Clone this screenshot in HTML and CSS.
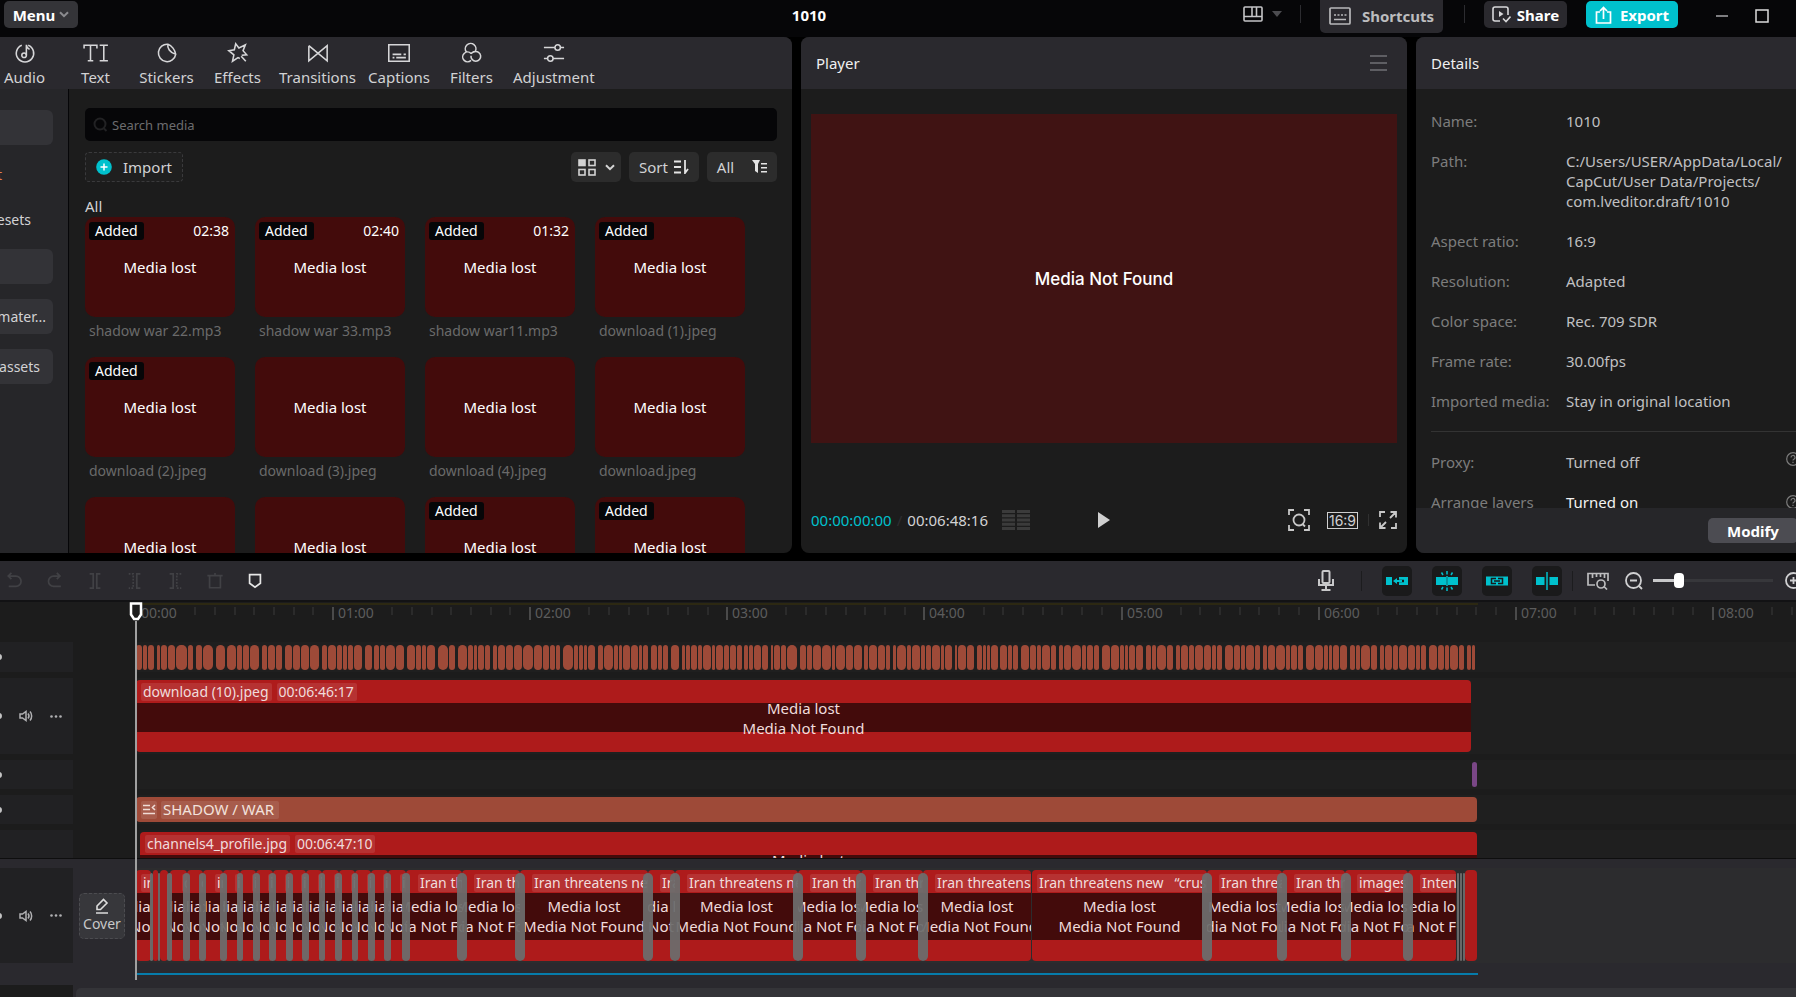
FILE: index.html
```html
<!DOCTYPE html>
<html lang="en">
<head>
<meta charset="utf-8">
<title>1010</title>
<link rel="stylesheet" href="styles.css">
</head>
<body>
<div class="app">
  <header class="titlebar">
    <div class="titlebar-left">
      <button class="btn btn-menu">Menu
        <svg width="10" height="7" viewBox="0 0 10 7" fill="none" stroke="#8b8b8f" stroke-width="2"><path d="M1 1.2l4 4 4-4"/></svg>
      </button>
    </div>
    <h1 class="project-title">1010</h1>
    <div class="titlebar-right">
      <button class="icon-btn layout-btn" aria-label="Layout">
        <svg width="20" height="16" viewBox="0 0 20 16" fill="none" stroke="#c4c4c6" stroke-width="1.6"><rect x="1" y="1" width="18" height="14" rx="1"/><path d="M1 10.5h18M9 1v9.500M13.500 1v9.500"/></svg>
        <svg width="10" height="6" viewBox="0 0 10 6" fill="#4c4c50"><path d="M0 0h10L5 6z"/></svg>
      </button>
      <span class="bar-sep"></span>
      <button class="btn btn-shortcuts">
        <svg width="22" height="18" viewBox="0 0 22 18" fill="none" stroke="#b8b8ba" stroke-width="1.7"><rect x="1" y="1" width="20" height="16" rx="1"/><path d="M5 8h2M8.500 8h2M12 8h2M15.500 8h2M5 12.500h12"/></svg>
        Shortcuts
      </button>
      <span class="bar-sep"></span>
      <button class="btn btn-share">
        <svg width="19" height="17" viewBox="0 0 19 17" fill="none" stroke="#d8d8da" stroke-width="1.6"><path d="M8 15H3a2 2 0 0 1-2-2V3a2 2 0 0 1 2-2h11a2 2 0 0 1 2 2v6M11 12.500l3 3 4.500-5"/><path d="M7 5l4.500 3L7 11z" fill="#d8d8da" stroke="none"/></svg>
        Share
      </button>
      <button class="btn btn-export">
        <svg width="17" height="18" viewBox="0 0 17 18" fill="none" stroke="#fff" stroke-width="1.7"><path d="M5 6H1.500v11h14V6H12M8.500 13V1.500M5 5l3.500-3.500L12 5"/></svg>
        Export
      </button>
      <button class="icon-btn win-btn" aria-label="Minimize"><svg width="12" height="2"><rect width="12" height="2" fill="#7d7d80"/></svg></button>
      <button class="icon-btn win-btn" aria-label="Maximize"><svg width="14" height="14" fill="none" stroke="#dcdcdc" stroke-width="1.500"><rect x="1" y="1" width="12" height="12"/></svg></button>
    </div>
  </header>

  <main class="panels">
    <section class="panel media">
      <nav class="tabs">
        <button class="tab"><svg viewBox="0 0 24 24"><path d="M8.500 3.500a9.500 9.500 0 1 0 7 0"/><circle cx="11" cy="14.500" r="2.500"/><path d="M13.500 14.500V3c0 3 1.500 4 3.500 5"/></svg>Audio</button>
        <button class="tab"><svg class="icon-wide" viewBox="0 0 28 24"><path d="M1 7V3.500h14V7M8 3.500v17M5 20.500h6M18 3.500h9M22.500 3.500v17M18 20.500h9"/></svg>Text</button>
        <button class="tab"><svg viewBox="0 0 24 24"><path d="M13 2.500A9.500 9.500 0 1 0 21.500 13.500C21 9 17 3.500 13 2.500zM13 2.500c-1 4 2 9 8.500 11"/></svg>Stickers</button>
        <button class="tab"><svg viewBox="0 0 24 24"><path d="M14 18l-2-1-6 4 1.500-7L2 9.500l6-1L9.500 2 13 6.500 20 3l-2.500 6.500L21.500 14 16 14.500M15.500 15.500l5 5.500"/></svg>Effects</button>
        <button class="tab"><svg viewBox="0 0 24 24"><path d="M2 4v16.500L22 4v16.500L2 4"/></svg>Transitions</button>
        <button class="tab"><svg viewBox="0 0 24 24"><path d="M.8 3h22.400v18H.8zM5 13.500h9.500M17 13.500h2.500M5 17h2M9 17h10.500" stroke-width="1.800"/></svg>Captions</button>
        <button class="tab"><svg viewBox="0 0 24 24"><path d="M7 11A5.800 5.800 0 1 1 16.500 10.500M12 12.500A5.300 5.300 0 1 0 12 20M12 15a5.300 5.300 0 1 0 4-4.500c-1.500 0-3 1.500-4 2"/></svg>Filters</button>
        <button class="tab"><svg viewBox="0 0 24 24"><path d="M1 6h12M19 6h4M1 18h4M11 18h12"/><circle cx="16" cy="6" r="3"/><circle cx="8" cy="18" r="3"/></svg>Adjustment</button>
      </nav>
      <div class="media-main">
        <aside class="sidebar">
          <button class="side-item side-filled" aria-label="Media"></button>
          <button class="side-item side-accent">t</button>
          <button class="side-item side-sub">esets</button>
          <button class="side-item side-filled side-gap" aria-label="Library"></button>
          <button class="side-item side-filled side-gap">mater...</button>
          <button class="side-item side-filled side-gap side-short">assets</button>
        </aside>
        <div class="library">
          <label class="search">
            <svg width="15" height="15" viewBox="0 0 15 15" fill="none" stroke="#222224" stroke-width="2"><circle cx="7" cy="7" r="5.500"/><path d="M10.500 11l3 3"/></svg>
            <input type="text" placeholder="Search media" aria-label="Search media">
          </label>
          <div class="library-bar">
            <button class="import"><svg width="16" height="16" viewBox="0 0 16 16"><circle cx="8" cy="8" r="7.800" fill="#00c1cd"/><path d="M4.500 8h7M8 4.500v7" stroke="#fff" stroke-width="1.500"/></svg>Import</button>
            <div class="filters">
              <button class="chip chip-view" aria-label="View">
                <svg width="18" height="17" viewBox="0 0 18 17" fill="none" stroke="#d4d4d4" stroke-width="1.600"><rect x="1" y="1" width="6" height="5.500" fill="#d4d4d4"/><rect x="11" y="1" width="6" height="5.500"/><rect x="1" y="10.500" width="6" height="5.500"/><rect x="11" y="10.500" width="6" height="5.500"/></svg>
                <svg width="10" height="7" viewBox="0 0 10 7" fill="none" stroke="#d4d4d4" stroke-width="2"><path d="M1 1.200l4 4 4-4"/></svg>
              </button>
              <button class="chip">Sort <svg width="15" height="14" viewBox="0 0 15 14" fill="none" stroke="#e4e4e4" stroke-width="1.800"><path d="M0 1.500h7M0 7h7M0 12.500h7M11 0v13l3-4"/></svg></button>
              <button class="chip chip-all">All <svg width="15" height="14" viewBox="0 0 15 14" fill="#e4e4e4"><path d="M0 0h8L6 4v9L3 11V4zM9 3h6v1.500H9zM9 7h6v1.500H9zM9 11h6v1.500H9z"/></svg></button>
            </div>
          </div>
          <h2 class="group-title">All</h2>
          <div class="thumbs">
            <figure class="item"><div class="thumb"><span class="added">Added</span><span class="dur">02:38</span>Media lost</div><figcaption>shadow war 22.mp3</figcaption></figure>
            <figure class="item"><div class="thumb"><span class="added">Added</span><span class="dur">02:40</span>Media lost</div><figcaption>shadow war 33.mp3</figcaption></figure>
            <figure class="item"><div class="thumb"><span class="added">Added</span><span class="dur">01:32</span>Media lost</div><figcaption>shadow war11.mp3</figcaption></figure>
            <figure class="item"><div class="thumb"><span class="added">Added</span>Media lost</div><figcaption>download (1).jpeg</figcaption></figure>
            <figure class="item"><div class="thumb"><span class="added">Added</span>Media lost</div><figcaption>download (2).jpeg</figcaption></figure>
            <figure class="item"><div class="thumb">Media lost</div><figcaption>download (3).jpeg</figcaption></figure>
            <figure class="item"><div class="thumb">Media lost</div><figcaption>download (4).jpeg</figcaption></figure>
            <figure class="item"><div class="thumb">Media lost</div><figcaption>download.jpeg</figcaption></figure>
            <figure class="item"><div class="thumb">Media lost</div></figure>
            <figure class="item"><div class="thumb">Media lost</div></figure>
            <figure class="item"><div class="thumb"><span class="added">Added</span>Media lost</div></figure>
            <figure class="item"><div class="thumb"><span class="added">Added</span>Media lost</div></figure>
          </div>
        </div>
      </div>
    </section>

    <section class="panel player">
      <div class="panel-head"><h2>Player</h2>
        <button class="icon-btn" aria-label="Player menu"><svg width="17" height="16" viewBox="0 0 17 16" stroke="#5e5e63" stroke-width="2"><path d="M0 1h17M0 8h17M0 15h17"/></svg></button>
      </div>
      <div class="stage">Media Not Found</div>
      <div class="controls">
        <div class="controls-left">
          <span class="time-now">00:00:00:00</span><span class="time-sep">/</span><span>00:06:48:16</span>
          <svg class="meter" width="28" height="20" viewBox="0 0 28 20" stroke="#3b3b3b" stroke-width="3"><path d="M0 1.500h13M15 1.500h13M0 5.800h13M15 5.800h13M0 10h13M15 10h13M0 14.200h13M15 14.200h13M0 18.500h13M15 18.500h13"/></svg>
        </div>
        <button class="icon-btn" aria-label="Play"><svg width="12" height="16" viewBox="0 0 12 16" fill="#d0d0d0"><path d="M0 0l12 8-12 8z"/></svg></button>
        <div class="controls-right">
          <button class="icon-btn" aria-label="Zoom preview"><svg width="22" height="22" viewBox="0 0 22 22" fill="none" stroke="#c8c8c8" stroke-width="1.800"><path d="M1 6V1h5M16 1h5v5M21 16v5h-5M6 21H1v-5M14.500 15l2.500 2.500"/><circle cx="11" cy="11" r="5.500"/></svg></button>
          <button class="ratio">16:9</button>
          <span class="thin-sep"></span>
          <button class="icon-btn" aria-label="Full screen"><svg width="18" height="18" viewBox="0 0 18 18" fill="none" stroke="#c8c8c8" stroke-width="1.800"><path d="M1 6V1h5M12 17h5v-5M11 7l6-6M11.500 1H17v5.500M7 11l-6 6M1 11.500V17h5.500"/></svg></button>
        </div>
      </div>
    </section>

    <section class="panel details">
      <div class="panel-head"><h2>Details</h2></div>
      <dl class="props">
        <div><dt>Name:</dt><dd>1010</dd></div>
        <div><dt>Path:</dt><dd>C:/Users/USER/AppData/Local/<br>CapCut/User Data/Projects/<br>com.lveditor.draft/1010</dd></div>
        <div><dt>Aspect ratio:</dt><dd>16:9</dd></div>
        <div><dt>Resolution:</dt><dd>Adapted</dd></div>
        <div><dt>Color space:</dt><dd>Rec. 709 SDR</dd></div>
        <div><dt>Frame rate:</dt><dd>30.00fps</dd></div>
        <div class="ruled"><dt>Imported media:</dt><dd>Stay in original location</dd></div>
        <div><dt>Proxy:</dt><dd>Turned off</dd><svg class="help" viewBox="0 0 14 14"><circle cx="7" cy="7" r="6.300"/><path d="M5 5.500a2 2 0 1 1 2.800 1.800c-.6.300-.8.500-.8 1.200M7 9.800v1.200"/></svg></div>
        <div><dt>Arrange layers</dt><dd class="strong">Turned on</dd><svg class="help help-mid" viewBox="0 0 14 14"><circle cx="7" cy="7" r="6.300"/><path d="M5 5.500a2 2 0 1 1 2.800 1.800c-.6.300-.8.500-.8 1.200M7 9.800v1.200"/></svg></div>
      </dl>
      <footer class="details-foot"><button class="modify">Modify</button></footer>
    </section>
  </main>

  <section class="timeline">
    <div class="tl-bar">
      <div class="tl-tools">
        <button aria-label="Undo"><svg viewBox="0 0 20 20"><path d="M6 1L2.500 4.500 6 8M2.500 4.500H11a5.500 5.500 0 0 1 0 11.500H3"/></svg></button>
        <button aria-label="Redo"><svg viewBox="0 0 20 20"><path d="M12 1l3.500 3.500L12 8M15.500 4.500H8.500a5.500 5.500 0 0 0 0 11.500h8"/></svg></button>
        <button aria-label="Split"><svg viewBox="0 0 20 20"><path d="M4 2h4v16H4M16 2h-4v16h4"/></svg></button>
        <button aria-label="Delete left"><svg viewBox="0 0 20 20"><path d="M3 2h5v16H3" stroke-dasharray="2 1.500"/><path d="M16 2h-4v16h4"/></svg></button>
        <button aria-label="Delete right"><svg viewBox="0 0 20 20"><path d="M4 2h4v16H4"/><path d="M17 2h-5v16h5" stroke-dasharray="2 1.500"/></svg></button>
        <button aria-label="Delete"><svg viewBox="0 0 20 20"><path d="M1.500 4h17M10 1v3M4 4v13.500h12V4"/></svg></button>
        <button class="on" aria-label="Marker"><svg viewBox="0 0 20 20"><path d="M4 3h12v9.500L10 17l-6-4.500z"/></svg></button>
      </div>
      <div class="tl-options">
        <button class="icon-btn" aria-label="Record"><svg width="16" height="21" viewBox="0 0 16 21" fill="none" stroke="#c8c8ca" stroke-width="2"><rect x="4.500" y="1" width="7" height="12" rx="1"/><path d="M1 9v6h14V9M8 15v4M3.500 20h9"/></svg></button>
        <span class="tl-sep sep-a"></span>
        <div class="toggles">
          <button aria-label="Main track magnet"><svg viewBox="0 0 24 20"><path d="M1 6h6v8H1zM14 6h9v8h-9v-2.800h5V8.800h-5z"/><path d="M8 10l4-3v2h5v2h-5v2z"/></svg></button>
          <button aria-label="Auto snapping"><svg viewBox="0 0 24 20"><path d="M1 6h10v8H1zM13 6h10v8H13z"/><path class="ln" d="M12 0v3.500M6.500 1.500l1.500 2.500M17.500 1.500L16 4M12 16.500V20M6.500 18.500L8 16M17.500 18.500L16 16M12 5v10"/></svg></button>
          <button aria-label="Linkage"><svg viewBox="0 0 24 20"><path d="M1 5.500h22v9H1z"/><path class="dk" d="M11 7.500H6.500v5H11M13 7.500h4.500v5H13M9 10h6"/></svg></button>
          <button aria-label="Preview axis"><svg viewBox="0 0 24 20"><path d="M1 6h8.500v8H1zM14.500 6H23v8h-8.500z"/><path class="ln" d="M12 1v18"/></svg></button>
        </div>
        <span class="tl-sep sep-b"></span>
        <button class="icon-btn" aria-label="Fit timeline"><svg width="22" height="18" viewBox="0 0 22 18" fill="none" stroke="#bcbcbe" stroke-width="1.700"><path d="M8 13H1V1.500h20V9M5.500 2v4M9.500 2v3M13.500 2v3M17.500 2v4M17 14.500l3 3"/><circle cx="14" cy="12" r="4"/></svg></button>
        <button class="icon-btn zoom-out" aria-label="Zoom out"><svg width="18" height="18" viewBox="0 0 18 18" fill="none" stroke="#d0d0d2" stroke-width="1.800"><circle cx="8.500" cy="8.500" r="7.500"/><path d="M5 8.500h7M14 14l3 3"/></svg></button>
        <input class="zoom" type="range" min="0" max="100" value="19" aria-label="Timeline zoom">
        <button class="icon-btn zoom-in" aria-label="Zoom in"><svg width="18" height="18" viewBox="0 0 18 18" fill="none" stroke="#d0d0d2" stroke-width="1.800"><circle cx="8.500" cy="8.500" r="7.500"/><path d="M5 8.500h7M8.500 5v7M14 14l3 3"/></svg></button>
      </div>
    </div>

    <div class="tl-body">
      <div class="tl-scroll">
        <div class="ruler" id="ruler"></div>
        <div class="track t-small"><div class="head"><i class="dot"></i></div><div class="lane" id="captions"></div></div>
        <div class="track t-video"><div class="head"><i class="dot"></i>
            <svg class="spk" viewBox="0 0 14 12"><path d="M1 4h2.500L7 1.500v9L3.500 8H1zM9 3.500c1.200 1.500 1.200 3.500 0 5M11 1.500c2.200 2.500 2.200 6.500 0 9"/></svg>
            <svg class="more" viewBox="0 0 12 3"><circle cx="1.500" cy="1.500" r="1.300"/><circle cx="6" cy="1.500" r="1.300"/><circle cx="10.500" cy="1.500" r="1.300"/></svg></div>
          <div class="lane"><div class="clip" style="left:0;width:1335px"><div class="labels"><span>download (10).jpeg</span><span>00:06:46:17</span></div><div class="lost lost-short"><p>Media lost</p><p>Media Not Found</p></div></div></div></div>
        <div class="track t-text"><div class="head"><i class="dot"></i></div><div class="lane"><div class="bit-purple" style="left:1336px;width:5px"></div></div></div>
        <div class="track t-text"><div class="head"><i class="dot"></i></div><div class="lane"><div class="text-clip" style="left:0;width:1341px"><span><svg width="13" height="11" viewBox="0 0 13 11" fill="none" stroke="#f0dcd6" stroke-width="1.600"><path d="M0 1.500h7M0 5.500h7M0 9.500h12M12 1L9.500 3.500 12 6"/></svg></span><span>SHADOW / WAR</span></div></div></div>
        <div class="track t-video t-last"><div class="head"></div><div class="lane"><div class="clip" style="left:4px;width:1337px"><div class="labels"><span>channels4_profile.jpg</span><span>00:06:47:10</span></div><div class="lost lost-short"><p>Media lost</p><p>Media Not Found</p></div></div></div></div>
      </div>
      <div class="tl-main">
        <div class="track t-main"><div class="head"><i class="dot"></i>
            <svg class="spk" viewBox="0 0 14 12"><path d="M1 4h2.500L7 1.500v9L3.500 8H1zM9 3.500c1.200 1.500 1.200 3.500 0 5M11 1.500c2.200 2.500 2.200 6.500 0 9"/></svg>
            <svg class="more" viewBox="0 0 12 3"><circle cx="1.500" cy="1.500" r="1.300"/><circle cx="6" cy="1.500" r="1.300"/><circle cx="10.500" cy="1.500" r="1.300"/></svg></div>
          <div class="cover-cell"><button class="cover"><svg width="14" height="16" viewBox="0 0 14 16" fill="none" stroke="#dcdcdc" stroke-width="1.600"><path d="M2 8l6.500-6.500L12 5l-6.500 6.500H2zM1 15h12"/></svg>Cover</button></div>
          <div class="lane" id="main-lane"></div></div>
        <div class="extent"></div>
        <div class="tl-foot"><div class="corner"></div><div class="hscroll"></div></div>
      </div>
      <div class="playhead"><svg width="14" height="19" viewBox="0 0 14 19" fill="#1c1c1c" stroke="#fff" stroke-width="2.500"><path d="M2 1.500h10v11L9 17H5l-3-4.500z"/></svg></div>
    </div>
  </section>
</div>
<script src="app.js"></script>
</body>
</html>
```

FILE: styles.css
```css
* { box-sizing: border-box; }
body { margin: 0; background: #000; color: #d2d2d4; font: 15px/20px "Noto Sans", "Open Sans", sans-serif; overflow: hidden; }
button { font: inherit; color: inherit; background: none; border: 0; padding: 0; display: flex; align-items: center; justify-content: center; flex: none; }
h1, h2, p, dl, dd, figure { margin: 0; font-size: 15px; font-weight: 400; }
svg { flex: none; display: block; }
.app { height: 100vh; display: flex; flex-direction: column; }

.titlebar { flex: none; height: 37px; display: flex; background: #060608; overflow: hidden; }
.titlebar-left { width: 375px; padding: 1px 0 0 4px; }
.project-title { flex: 1; text-align: center; font-weight: 700; color: #fff; padding-top: 5px; }
.titlebar-right { display: flex; align-items: flex-start; padding-right: 24px; }
.btn { height: 27px; border-radius: 5px; font-weight: 700; color: #fff; }
.btn-menu { width: 74px; gap: 4px; background: #343438; }
.layout-btn { gap: 9px; height: 28px; }
.bar-sep { width: 1px; height: 18px; margin: 5px 19px 0 18px; background: #2c2c30; }
.btn-shortcuts { height: 33px; width: 123px; gap: 11px; background: #2a292e; color: #bcbcbe; border-radius: 0 0 5px 5px; padding-bottom: 1px; }
.btn-shortcuts + .bar-sep { margin-left: 21px; }
.btn-share { width: 83px; margin-top: 1px; gap: 6px; background: #2a292e; }
.btn-export { width: 92px; margin: 1px 34px 0 19px; gap: 8px; background: #00c1cd; }
.win-btn { width: 20px; height: 32px; margin-left: 20px; }
.btn-export + .win-btn { margin-left: 0; }

.panels { flex: 516 1 0; min-height: 0; display: grid; grid-template-columns: 792fr 606fr 380fr; gap: 9px; }
.panel { min-width: 0; min-height: 0; background: #1c1c1c; border-radius: 8px; overflow: hidden; display: flex; flex-direction: column; }
.media { border-radius: 0 8px 8px 0; }
.details { border-radius: 8px 0 0 8px; }
.panel-head { flex: none; height: 52px; padding: 0 20px 0 15px; background: #2a292e; display: flex; align-items: center; justify-content: space-between; color: #f0f0f0; }

.tabs { flex: none; height: 52px; background: #2a292e; display: flex; margin-left: -11px; }
.tab { flex-direction: column; justify-content: flex-start; min-width: 71px; padding: 5px 6px 0; gap: 3px; }
.tab svg { width: 22px; height: 22px; fill: none; stroke: #d6d6d8; stroke-width: 1.700; }
.tab .icon-wide { width: 26px; }
.media-main { flex: 1; min-height: 0; display: flex; }
.sidebar { width: 69px; flex: none; padding: 21px 15px 0 0; background: #262629; border-right: 1px solid #060608; font-size: 14px; overflow: hidden; }
.side-item { width: 100%; height: 35px; justify-content: flex-end; padding-right: 7px; }
.side-filled { background: #333337; border-radius: 0 6px 6px 0; }
.side-accent { color: #e08050; margin-top: 12px; padding-right: 51px; }
.side-sub { margin-top: 10px; padding-right: 22px; }
.side-gap { margin-top: 15px; }
.side-sub + .side-gap { margin-top: 12px; }
.side-short { padding-right: 13px; }
.library { flex: 1; min-width: 0; padding: 19px 15px 0 16px; overflow: hidden; }
.search { height: 33px; display: flex; align-items: center; gap: 4px; padding: 0 8px; background: #060608; border-radius: 5px; }
.search input { flex: 1; background: none; border: 0; padding: 0; outline: 0; color: #ddd; font: 13px/20px "Noto Sans", "Open Sans", sans-serif; }
.search input::placeholder { color: #6c6c6e; opacity: 1; }
.library-bar { display: flex; justify-content: space-between; margin-top: 11px; }
.import { width: 98px; height: 30px; gap: 11px; border: 1px dashed #3a3a3c; border-radius: 4px; background: #1f1f1f; }
.filters { display: flex; gap: 8px; }
.chip { width: 70px; height: 30px; gap: 6px; background: #2c2c2c; border-radius: 5px; }
.chip-view { width: 50px; gap: 9px; }
.chip-all { gap: 18px; }
.group-title { margin-top: 14px; }
.thumbs { display: grid; grid-template-columns: repeat(4, 150px); gap: 20px; margin-top: 1px; }
.item { height: 120px; }
.thumb { position: relative; height: 100px; border-radius: 10px; background: #430b0b; color: #fff; display: flex; align-items: center; justify-content: center; }
.added, .dur { position: absolute; top: 5px; font-size: 14px; line-height: 18px; }
.added { left: 4px; padding: 0 6px; background: #060608; border-radius: 3px; }
.dur { right: 6px; }
figcaption { padding: 4px 4px 0; font-size: 14px; color: #6a6a6a; white-space: nowrap; }

.stage { flex: 329 1 0; margin: 25px 10px 0; background: #401313; color: #fff; display: flex; align-items: center; justify-content: center; font: 500 17px/20px Inter, sans-serif; }
.controls { flex: none; height: 110px; padding: 44px 10px 0; display: grid; grid-template-columns: 1fr auto 1fr; align-items: start; }
.controls > *, .controls-right > .icon-btn { height: 66px; display: flex; align-items: center; }
.time-now { color: #00c1cd; }
.time-sep { color: #2e2e30; margin: 0 5px; }
.meter { margin-left: 14px; }
.controls-right { justify-content: flex-end; gap: 17px; }
.ratio { width: 31px; height: 17px; border: 1px solid #d0d0d0; font: 14px/15px Inter, sans-serif; }
.thin-sep { width: 1px; height: 12px; background: #303030; margin: 0 -7px; }

.props { flex: 1; min-height: 0; overflow: hidden; padding: 22px 0 0 15px; margin-right: -4px; }
.props > div { display: flex; margin-bottom: 20px; }
.props dt { width: 135px; flex: none; color: #7c7c7c; white-space: nowrap; }
.props dd { color: #c0c0c2; white-space: nowrap; }
.props .strong { color: #f2f2f2; }
.props .ruled { padding-bottom: 20px; border-bottom: 1px solid #333; }
.help { width: 14px; height: 14px; margin-left: auto; fill: none; stroke: #7c7c7c; stroke-width: 1.200; }
.help-mid { align-self: center; }
.details-foot { flex: none; height: 45px; background: #262629; display: flex; justify-content: flex-end; align-items: center; }
.modify { width: 90px; height: 25px; margin-right: -2px; border-radius: 5px; background: #4c4c52; color: #fff; font-weight: 700; }

.timeline { flex: 436 1 0; min-height: 0; margin-top: 8px; display: flex; flex-direction: column; background: #1c1c1c; }
.tl-bar { flex: none; height: 41px; background: #2a292e; border-bottom: 2px solid #121214; display: flex; justify-content: space-between; }
.tl-tools { display: flex; gap: 20px; align-items: center; }
.tl-tools button { width: 20px; height: 30px; color: #414145; }
.tl-tools button:first-child { margin-left: 5px; }
.tl-tools .on { color: #e6e6e6; }
.tl-tools svg { width: 18px; height: 18px; fill: none; stroke: currentColor; stroke-width: 1.900; }
.tl-options { display: flex; align-items: center; margin-right: -7px; }
.tl-sep { width: 1px; height: 20px; background: #1c1c1e; }
.sep-a { margin: 0 20px 0 27px; }
.sep-b { margin: 0 14px 0 10px; }
.toggles { display: flex; gap: 20px; }
.toggles button { width: 30px; height: 30px; background: #1a1a1b; border-radius: 5px; }
.toggles svg { width: 24px; height: 20px; fill: #00c1cd; }
.toggles .ln { stroke: #00c1cd; stroke-width: 1.500; }
.toggles .dk { stroke: #1a1a1b; stroke-width: 1.500; fill: none; }
.zoom-out { margin-left: 16px; }
.zoom-in { margin-left: 12px; }
.zoom { appearance: none; width: 120px; height: 16px; margin: 0 0 0 10px; background: linear-gradient(90deg, #c8c8ca 20%, #37373b 20%) center / 100% 3px no-repeat; }
.zoom::-webkit-slider-thumb { appearance: none; width: 10px; height: 15px; border-radius: 4px; background: #fff; }

.tl-body { position: relative; flex: 1; min-height: 0; display: flex; flex-direction: column; }
.tl-scroll { flex: 1; min-height: 0; overflow: hidden; }
.ruler { position: relative; height: 35px; margin: 1px 0 4px 136px; font-size: 14px; color: #5c5c5c; }
.ruler::before { content: ""; position: absolute; top: 0; left: 0; width: 1342px; height: 2px; background: #2c2812; }
.major { position: absolute; top: 4px; height: 13px; border-left: 2px solid #4a4a4a; padding-left: 4px; line-height: 11px; }
.minor { position: absolute; top: 4px; width: 2px; height: 8px; background: #2b2b2b; }
.track { position: relative; display: flex; margin-bottom: 6px; }
.head { position: relative; width: 73px; flex: none; background: #212123; display: flex; align-items: center; gap: 17px; padding-right: 11px; justify-content: flex-end; }
.lane { position: relative; flex: 1; margin-left: 63px; min-width: 0; background: #1f1f1f; }
.dot { position: absolute; left: -4px; width: 6px; height: 6px; border-radius: 3px; background: #c4c4c4; }
.spk { width: 14px; height: 12px; fill: none; stroke: #b0b0b2; stroke-width: 1.500; }
.more { width: 12px; height: 3px; fill: #b0b0b2; }
.t-small { height: 30px; }
.t-video { height: 76px; }
.t-text { height: 29px; }
.cap { position: absolute; top: 3px; height: 25px; border-radius: 5px; background: #9e4a38; }
.bit-purple { position: absolute; top: 2px; height: 25px; border-radius: 3px; background: #7a4786; }
.text-clip { position: absolute; top: 2px; height: 25px; border-radius: 4px; background: #9e4a38; color: #f2e2dc; display: flex; align-items: center; gap: 4px; padding-left: 5px; }
.text-clip span { height: 18px; line-height: 17px; padding: 0 5px 0 2px; background: rgba(255,255,255,.1); border-radius: 2px; display: flex; align-items: center; }
.text-clip span:first-child { padding: 0 1px 0 2px; }
.clip { position: absolute; top: 2px; bottom: 2px; border-radius: 4px; background: #ae1b1b; overflow: hidden; display: flex; flex-direction: column; color: #f0dcdc; }
.labels { flex: none; height: 23px; padding: 3px 0 0 5px; display: flex; gap: 5px; font-size: 14px; line-height: 18px; white-space: nowrap; }
.labels span { padding: 0 3px 0 2px; height: 18px; background: rgba(255,255,255,.1); border-radius: 2px; }
.lost { height: 47px; padding-top: 3px; background: #430b0b; display: flex; flex-direction: column; align-items: center; white-space: nowrap; }
.lost-short { height: 29px; padding-top: 0; margin-bottom: auto; justify-content: center; }
.lost p { flex: none; height: 20px; position: relative; }

.tl-main { flex: none; border-top: 1px solid #0e0e0e; background: #2a292e; }
.t-main { height: 95px; margin: 9px 0 0; }
.t-main .lane { margin-left: 0; background: #2c2c2e; }
.t-main .labels { padding-top: 4px; }
.t-main .clip.linked .labels { padding-left: 12px; }
.cover-cell { width: 63px; display: flex; align-items: center; padding-left: 6px; }
.cover { width: 46px; height: 46px; flex-direction: column; gap: 1px; background: #37373b; border: 1px dashed #4c4c50; border-radius: 5px; font-size: 14px; line-height: 18px; color: #c8c8c8; }
.joint { position: absolute; top: 5px; bottom: 2px; border-radius: 5px; background: rgba(108,108,108,.94); }
.extent { width: 1342px; height: 2px; margin: 10px 0 0 136px; background: #067cab; }
.tl-foot { display: flex; margin-top: 10px; height: 12px; }
.corner { width: 73px; background: #1c1c1c; }
.hscroll { flex: 1; margin: 3px 0 0 3px; background: #343438; border-radius: 5px 0 0 0; }
.playhead { position: absolute; left: 129px; top: 0; bottom: 17px; width: 14px; display: flex; flex-direction: column; align-items: center; }
.playhead::after { content: ""; flex: 1; width: 2px; background: #a0a0a0; }
```

FILE: app.js
```js
const ORIGIN = 136;
const MINUTE = 197.1;

function add(parent, cls, left, width, html) {
  const el = document.createElement('div');
  el.className = cls;
  el.style.left = left + 'px';
  if (width) el.style.width = width + 'px';
  if (html) el.innerHTML = html;
  parent.appendChild(el);
  return el;
}

const ruler = document.getElementById('ruler');
for (let m = 0; m <= 8; m++) {
  add(ruler, 'major', Math.round(m * MINUTE) - 1, 0, '0' + m + ':00');
  for (let k = 3; k < 10; k++) add(ruler, 'minor', Math.round((m + k / 10) * MINUTE) - 1);
}

/* Caption spans as [start, end]. */
const captions = [
  [136,142],[143,147],[148,154],[157,160],[161,167],[168,175],[176,187],[188,193],[196,202],[203,213],[216,225],[227,236],[237,242],[243,249],[250,259],[262,267],[268,275],[276,282],[285,292],[293,300],[301,309],[310,319],[322,327],[328,336],[337,342],[343,347],[348,353],[354,362],[365,372],[374,379],[380,385],[386,395],[396,404],[407,415],[416,421],[422,426],[427,435],[438,448],
  [449,455],[458,467],[468,473],[474,477],[478,484],[485,490],[493,497],[498,505],[506,513],[514,522],[523,533],[534,542],[543,549],[550,555],[556,560],[563,573],[574,578],[579,583],[584,587],[588,595],[598,603],[604,613],[614,618],[619,622],[623,630],[631,638],[639,642],[643,648],[651,657],[658,662],[663,668],[671,679],[682,685],[686,690],[691,697],[698,702],[703,711],[712,715],[716,723],[724,729],[730,736],[737,742],[744,748],[749,753],[754,761],[762,768],[771,773],[774,780],[781,786],[787,797],[800,806],[807,812],[813,821],[822,831],[832,835],[836,845],[846,853],[854,862],[864,868],[869,877],[878,885],[886,890],[893,896],[897,906],[907,911],[912,920],[921,925],[926,931],[932,940],[941,944],[945,952],[955,957],[958,966],[967,974],[977,982],[983,986],[987,990],[991,998]
];
const tail = [7,4,5,0,8,6,4,8,5,0,4,7,9,4,6,5,0,8,8,4,3,6,7,0,5,4,9,6,0,4,7,5,8];
let x = 1000, i = 0;
while (x < 1470) {
  const w = tail[i++ % tail.length];
  if (w) { captions.push([x, x + w]); x += w + 1; } else x += 2;
}
captions.push([x, 1475]);
const capLane = document.getElementById('captions');
captions.forEach(([a, b]) => { if (b > a) add(capLane, 'cap', a - ORIGIN, b - a); });

const lost = '<div class="lost"><p>Media lost</p><p>Media Not Found</p></div>';
const clips = [
  [136,151,'images'],[153,158],[160,168],[170,187,'download'],[187,203,'channels'],[203,223,'images'],
  [223,240,'images'],[240,256,'images'],[256,273,'images'],[273,289,'images'],[289,306,'images'],[306,322,'images'],
  [322,339,'images'],[339,355,'images'],[355,371,'images'],[371,388,'images'],[388,406,'images'],
  [406,462,'Iran threatens'],[462,520,'Iran threatens'],[520,648,'Iran threatens new'],[648,675,'Iran'],
  [675,798,'Iran threatens new'],[798,861,'Iran threatens'],[861,923,'Iran threatens'],[923,1031,'Iran threatens'],
  [1032,1207,'Iran threatens new &nbsp; “crushing”'],[1207,1282,'Iran threatens'],[1282,1345,'Iran threatens'],
  [1345,1408,'images (1)'],[1408,1456,'Intense'],[1465,1477]
];
const mainLane = document.getElementById('main-lane');
clips.forEach(([a, b, name]) => {
  const linked = a !== 136 && a !== 1032;
  add(mainLane, 'clip' + (linked ? ' linked' : ''), a - ORIGIN, b - a,
    name ? '<div class="labels"><span>' + name + '</span></div>' + lost : '');
});
const joints = [
  [150,153],[158,160],[167,172],[183,190],[199,206],[220,227],[237,243],[253,260],[269,276],[286,293],[302,309],
  [319,325],[335,342],[352,358],[368,375],[384,391],[402,410],[457,467],[515,525],[643,653],[670,680],[793,803],
  [856,866],[918,928],[1202,1212],[1277,1287],[1341,1351],[1403,1413],[1457,1459],[1460,1462],[1463,1465]
];
joints.forEach(([a, b]) => add(mainLane, 'joint', a - ORIGIN, b - a));
```
